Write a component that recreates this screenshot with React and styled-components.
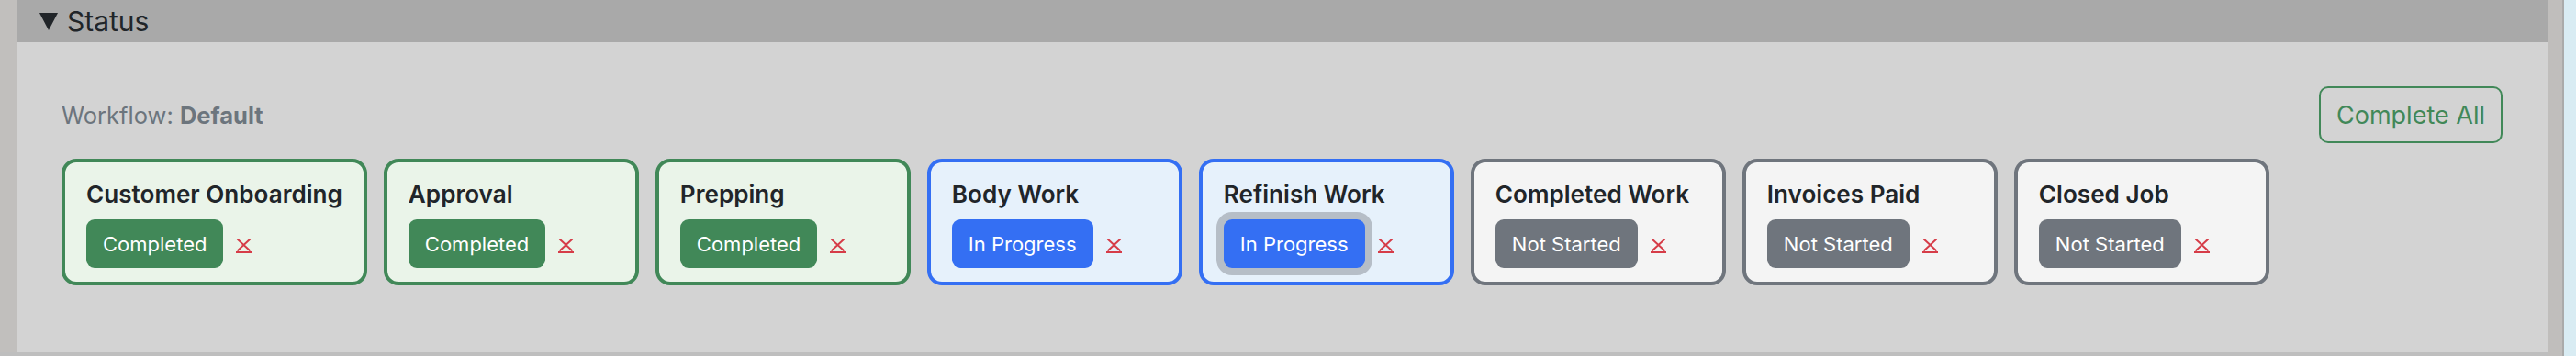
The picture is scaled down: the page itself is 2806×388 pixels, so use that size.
import React from "react";
import styled, { createGlobalStyle, css } from "styled-components";

const GlobalStyle = createGlobalStyle`
  html, body {
    margin: 0;
    padding: 0;
    background: #d3d3d3;
  }
  * {
    box-sizing: border-box;
  }
`;

// colours per stage state
const tones = {
  done: { main: "#418858", card: "#eaf4e9" },
  active: { main: "#346ff3", card: "#e6f1fb" },
  idle: { main: "#6f757d", card: "#f4f4f4" },
};

const Page = styled.div`
  display: flex;
  height: 388px;
  width: 2806px;
  font-family: Inter, "Liberation Sans", sans-serif;
  color: #212529;
`;

const LeftStrip = styled.div`
  width: 18px;
  flex: none;
  background: #c1bfbd;
  border-bottom: 4px solid #bebebe;
`;

const RightStrip = styled.div`
  width: 18px;
  flex: none;
  background: #c0bebc;
  border-right: 2px solid #aaaaaa;
`;

const SidePane = styled.div`
  width: 13px;
  flex: none;
  background: #d9ecf3;
`;

const Panel = styled.section`
  flex: 1;
  display: flex;
  flex-direction: column;
  min-width: 0;
`;

const Header = styled.div`
  height: 46px;
  flex: none;
  background: #a9a9a9;
  display: flex;
  align-items: center;
  gap: 10px;
  padding-left: 25px;
  font-size: 30px;
  line-height: 36px;
  color: #212529;
`;

const Body = styled.div`
  flex: 1;
  background: #d3d3d3;
  border-bottom: 4px solid #bebebe;
  padding: 48px 49px 0 49px;
  display: flex;
  flex-direction: column;
`;

const TopRow = styled.div`
  height: 62px;
  display: flex;
  align-items: center;
  justify-content: space-between;
`;

const WorkflowLabel = styled.div`
  font-size: 25.5px;
  color: #6c757d;

  b {
    font-weight: 700;
  }
`;

const OutlineButton = styled.button`
  height: 62px;
  padding: 0 17px;
  border: 2px solid #418858;
  border-radius: 10px;
  background: transparent;
  color: #418858;
  font-family: inherit;
  font-size: 27px;
  font-weight: 400;
  cursor: pointer;
`;

const StageRow = styled.div`
  display: flex;
  align-items: flex-start;
  gap: 18px;
  margin-top: 17px;
`;

const StageCard = styled.div`
  flex: none;
  min-width: 278px;
  height: 138px;
  border: 4px solid ${(p) => tones[p.$tone].main};
  background: ${(p) => tones[p.$tone].card};
  border-radius: 16px;
  padding: 19px 23px 15px 23px;
`;

const StageTitle = styled.div`
  font-size: 26.1px;
  font-weight: 600;
  line-height: 32px;
  white-space: nowrap;
  margin-bottom: 11px;
`;

const StatusLine = styled.div`
  display: flex;
  align-items: center;
  gap: 14px;
`;

const Badge = styled.span`
  height: 53px;
  padding: 0 18px;
  border-radius: 9px;
  display: inline-flex;
  align-items: center;
  background: ${(p) => tones[p.$tone].main};
  color: #ffffff;
  font-size: 22px;
  white-space: nowrap;
  ${(p) =>
    p.$focused &&
    css`
      box-shadow: 0 0 0 8px #b6bec7;
    `}
`;

const RemoveLink = styled.a`
  display: inline-flex;
  flex-direction: column;
  align-items: center;
  gap: 3px;
  margin-top: 4px;
  border-bottom: 2px solid #d63c48;
  cursor: pointer;

  svg {
    display: block;
  }
`;

const Caret = () => (
  <svg width="20" height="19" viewBox="0 0 20 19">
    <polygon points="0,0 20,0 10,19" fill="#212529" />
  </svg>
);

const Cross = () => (
  <svg width="17" height="14" viewBox="0 0 17 14">
    <path d="M1.5 0.5 L15.5 13.5 M15.5 0.5 L1.5 13.5" stroke="#d63c48" strokeWidth="2" fill="none" />
  </svg>
);

const stages = [
  { name: "Customer Onboarding", status: "Completed", tone: "done" },
  { name: "Approval", status: "Completed", tone: "done" },
  { name: "Prepping", status: "Completed", tone: "done" },
  { name: "Body Work", status: "In Progress", tone: "active" },
  { name: "Refinish Work", status: "In Progress", tone: "active", focused: true },
  { name: "Completed Work", status: "Not Started", tone: "idle" },
  { name: "Invoices Paid", status: "Not Started", tone: "idle" },
  { name: "Closed Job", status: "Not Started", tone: "idle" },
];

export default function App() {
  return (
    <>
      <GlobalStyle />
      <Page>
        <LeftStrip />
        <Panel>
          <Header>
            <Caret />
            <span>Status</span>
          </Header>
          <Body>
            <TopRow>
              <WorkflowLabel>
                Workflow: <b>Default</b>
              </WorkflowLabel>
              <OutlineButton>Complete All</OutlineButton>
            </TopRow>
            <StageRow>
              {stages.map((s) => (
                <StageCard key={s.name} $tone={s.tone}>
                  <StageTitle>{s.name}</StageTitle>
                  <StatusLine>
                    <Badge $tone={s.tone} $focused={s.focused}>
                      {s.status}
                    </Badge>
                    <RemoveLink>
                      <Cross />
                    </RemoveLink>
                  </StatusLine>
                </StageCard>
              ))}
            </StageRow>
          </Body>
        </Panel>
        <RightStrip />
        <SidePane />
      </Page>
    </>
  );
}
